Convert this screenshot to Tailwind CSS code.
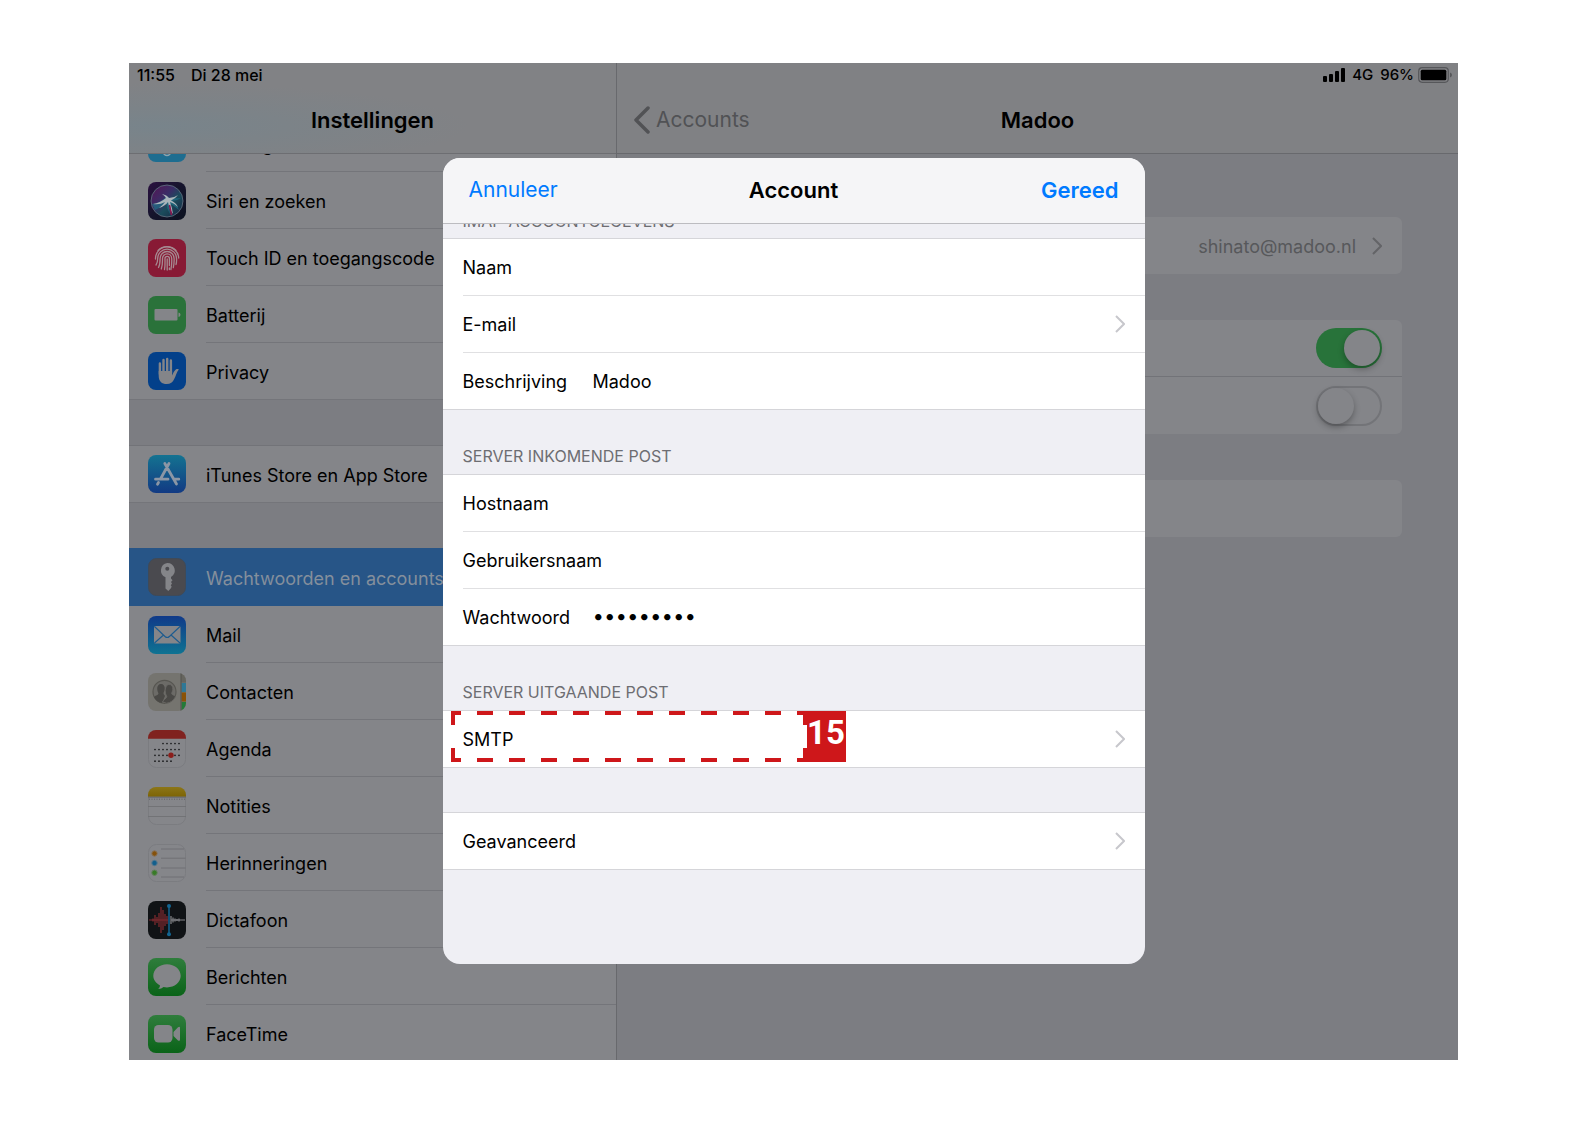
<!DOCTYPE html>
<html lang="nl">
<head>
  <meta charset="UTF-8">
  <meta name="viewport" content="width=device-width, initial-scale=1.0">
  <title>Instellingen - Account</title>
  <script src="https://cdn.jsdelivr.net/npm/@tailwindcss/browser@4"></script>
</head>
<body class="bg-white font-['Inter','Liberation_Sans',sans-serif] text-[18px] leading-6 text-black">
  <main class="px-[129px] py-[63px]">
    <div class="relative flex h-[calc(100vh-126px)] overflow-hidden bg-[#7c7d82]">

      <!-- Sidebar -->
      <aside class="flex w-[488px] shrink-0 flex-col border-r border-[#68696d] bg-[#848589]">
        <header class="h-[91px] shrink-0 border-b border-[#6d6e72] bg-[#818285] bg-[radial-gradient(ellipse_at_6%_70%,#78848b_0%,#7c8388_20%,#818285_48%)]">
          <div class="flex h-6 items-center gap-4 pl-2 text-[16px] font-medium">
            <span>11:55</span>
            <span>Di 28 mei</span>
          </div>
          <h1 class="flex h-[66px] items-center justify-center text-[22px] font-semibold">Instellingen</h1>
        </header>

        <nav class="min-h-0 flex-1 overflow-hidden">
          <!-- Row scrolled under the header -->
          <a href="#" class="flex h-[18px] items-end gap-5 overflow-hidden pl-[19px]">
            <svg class="mb-[10px] size-[38px] shrink-0" viewBox="0 0 38 38"><rect width="38" height="38" rx="8" fill="#1e6d90"/><circle cx="19" cy="28" r="3.5" fill="none" stroke="#8fa3ad" stroke-width="1.6"/></svg>
            <span class="flex h-[57px] flex-1 shrink-0 items-center border-b border-[#74757a] pt-[3px]">Achtergrond</span>
          </a>
          <a href="#" class="flex h-[57px] items-center gap-5 pl-[19px]">
            <svg class="size-[38px] shrink-0" viewBox="0 0 38 38">
              <defs>
                <linearGradient id="siriBg" x1="0" y1="0" x2="1" y2="1"><stop offset="0" stop-color="#2b1140"/><stop offset=".5" stop-color="#15142c"/><stop offset="1" stop-color="#0c1220"/></linearGradient>
                <linearGradient id="siriOrb" x1="0" y1="0" x2="1" y2="1"><stop offset="0" stop-color="#571353"/><stop offset=".4" stop-color="#3a2d66"/><stop offset=".6" stop-color="#1b4c5c"/><stop offset="1" stop-color="#16213f"/></linearGradient>
              </defs>
              <rect width="38" height="38" rx="8" fill="url(#siriBg)"/>
              <circle cx="19" cy="19" r="16" fill="url(#siriOrb)" stroke="#5b6b7c" stroke-width=".9"/>
              <path d="M4 22q8-1 14-7q5 2 15 1q-4 3-9 3q5 3 7 9q-6-5-10-7l1 11q-3-5-4-11q-5 5-11 7z" fill="#1f6f86" opacity=".7"/>
              <path d="M5 22q7-1 13-6q-1-2-4-4q5 1 7 4q5 0 9-3q-3 4-7 5.500q5 2 7 6.500q-4-4-8-5q2 5 3 12q-4-5-5-12q-3 4-9 6q4-3 6-6q-5 3-12 2z" fill="#a9b4ba"/>
              <path d="M21.500 23q1 5 2 10" stroke="#8c1750" stroke-width="1.600" fill="none"/>
            </svg>
            <span class="flex h-full flex-1 items-center border-b border-[#74757a] pt-[3px]">Siri en zoeken</span>
          </a>
          <a href="#" class="flex h-[57px] items-center gap-5 pl-[19px]">
            <svg class="size-[38px] shrink-0" viewBox="0 0 38 38">
              <rect width="38" height="38" rx="8" fill="#881a35"/>
              <g fill="none" stroke="#a68a91" stroke-width="1.3" stroke-linecap="round">
                <path d="M10 11.500a12.500 12.500 0 0 1 18 0"/>
                <path d="M7.500 20a11.600 11.600 0 0 1 23.200-1"/>
                <path d="M8 26c1.500-2 1.700-4 1.700-6.500a9.400 9.400 0 0 1 18.800 0q.3 3-.5 6"/>
                <path d="M10.500 28.500c1.600-3 1.600-6 1.600-9a7 7 0 0 1 14 0q.2 5-.8 9"/>
                <path d="M13.300 30c1.400-4 1.200-7 1.200-10.500a4.600 4.600 0 0 1 9.200 0q.3 6-.8 11"/>
                <path d="M16.500 30.500c.8-4 .5-7 .5-11a2.200 2.200 0 0 1 4.400 0v7"/>
                <path d="M19.200 20v11M21.400 29v1.500"/>
              </g>
            </svg>
            <span class="flex h-full flex-1 items-center border-b border-[#74757a] pt-[3px]">Touch ID en toegangscode</span>
          </a>
          <a href="#" class="flex h-[57px] items-center gap-5 pl-[19px]">
            <svg class="size-[38px] shrink-0" viewBox="0 0 38 38"><rect width="38" height="38" rx="8" fill="#2a723a"/><rect x="6.500" y="13" width="23" height="11.500" rx="1" fill="#848589"/><path d="M30.500 16.500q2 .5 2 2.200t-2 2.200z" fill="#848589"/></svg>
            <span class="flex h-full flex-1 items-center border-b border-[#74757a] pt-[3px]">Batterij</span>
          </a>
          <a href="#" class="flex h-[57px] items-center gap-5 border-b border-[#74757a] pl-[19px]">
            <svg class="size-[38px] shrink-0" viewBox="0 0 38 38">
              <rect width="38" height="38" rx="8" fill="#03408a"/>
              <g fill="none" stroke="#848589" stroke-width="2.400" stroke-linecap="round"><path d="M11.900 11.500V22M15.500 8V20M19.200 7V20M22.900 8.500V21"/></g>
              <path d="M10.700 19h13.400v4.500c1.200-2.500 2.300-5 4-6.200 1-.6 2.600-.4 2.700.2-2 2.500-3 6.500-4.600 9.600-1.500 3.200-3.700 5-7.400 5-5 0-8.100-3-8.100-8.100z" fill="#848589"/>
            </svg>
            <span class="pt-[3px]">Privacy</span>
          </a>

          <div class="h-[46px] border-b border-[#727378] bg-[#7c7d82]"></div>
          <a href="#" class="flex h-[57px] items-center gap-5 border-b border-[#74757a] pl-[19px]">
            <svg class="size-[38px] shrink-0" viewBox="0 0 38 38">
              <defs><linearGradient id="store" x2="0" y2="1"><stop stop-color="#147391"/><stop offset="1" stop-color="#123a83"/></linearGradient></defs>
              <rect width="38" height="38" rx="8" fill="url(#store)"/>
              <g fill="none" stroke="#8b96a5" stroke-width="2.800" stroke-linecap="round"><path d="M21 8.500 12.500 24M16.800 8.500 28.500 29M7.500 24.200H20M26 24.200h4.800M10.500 27.500 9.500 29.300"/></g>
            </svg>
            <span class="pt-[3px]">iTunes Store en App Store</span>
          </a>

          <div class="h-[45px] bg-[#7c7d82]"></div>
          <a href="#" aria-current="page" class="flex h-[58px] items-center gap-5 bg-[#275587] pl-[19px] text-[#848f9c]">
            <svg class="size-[38px] shrink-0" viewBox="0 0 38 38">
              <rect x=".5" y=".5" width="37" height="37" rx="8" fill="#4a4a4f" stroke="#3f4a58"/>
              <path fill-rule="evenodd" d="M19.300 5a7.500 7.500 0 0 1 3.700 14v1.500l1.500 1.800-1.500 1.800 1 1.400-1.200 1.700.9 1.500-1 1.800-2.400 2.500-2.800-2.500V19.300A7.500 7.500 0 0 1 19.300 5zm0 3.800a2 2 0 1 0 0 4 2 2 0 0 0 0-4z" fill="#848589"/>
            </svg>
            <span class="pt-[3px]">Wachtwoorden en accounts</span>
          </a>
          <a href="#" class="flex h-[57px] items-center gap-5 pl-[19px]">
            <svg class="size-[38px] shrink-0" viewBox="0 0 38 38">
              <defs><linearGradient id="mail" x2="0" y2="1"><stop stop-color="#103a89"/><stop offset="1" stop-color="#0f7392"/></linearGradient></defs>
              <rect width="38" height="38" rx="8" fill="url(#mail)"/>
              <rect x="6" y="10" width="26.500" height="17.500" rx="1.500" fill="#848589"/>
              <path d="M6.500 10.500 17 20.500q2.200 2 4.400 0L32 10.500M6.500 27l9-8M32 27l-9-8" fill="none" stroke="#1c5b8f" stroke-width="1.100"/>
            </svg>
            <span class="flex h-full flex-1 items-center border-b border-[#74757a] pt-[3px]">Mail</span>
          </a>
          <a href="#" class="flex h-[57px] items-center gap-5 pl-[19px]">
            <svg class="size-[38px] shrink-0" viewBox="0 0 38 38">
              <defs><clipPath id="tile"><rect width="38" height="38" rx="8"/></clipPath></defs>
              <g clip-path="url(#tile)">
                <rect width="38" height="38" fill="#75746f"/>
                <path d="M33 0h5v9.500h-5z" fill="#66655f"/><path d="M33.500 10H38v9h-4.500z" fill="#2f7897"/><path d="M33.500 19.500H38v9h-4.500z" fill="#8a5207"/><path d="M33.500 29H38v9h-4.500z" fill="#247a38"/>
                <path d="M33 0v38" stroke="#53524e"/>
                <circle cx="16.500" cy="18.800" r="11.500" fill="#6c6b67" stroke="#575651" stroke-width="1.200"/>
                <path d="M13 11c2.600 0 4 2 3.700 5-.2 2.300-1 3-1.200 4.200.2 1.800 1 1.500 1.500 2.800l-3 7q-6-1-8-6c2-2 4.300-1.700 4.500-3.500C10 19 9.300 18 9.200 16c-.2-3 1.400-5 3.800-5z" fill="#4a4946"/>
                <path d="M21 11.500c2.600 0 4 2 3.800 4.800-.2 2.200-1 3-1.200 4 .1 1.800 2.600 1.600 4 3.200q-3 6-9 6.700l-4-1.200c.8-3 4.200-3.500 4.200-5.500-.2-1.200-1.300-2-1.500-4.500-.3-4 1.200-7.500 3.700-7.500z" fill="#4a4946" stroke="#6c6b67" stroke-width=".8"/>
              </g>
            </svg>
            <span class="flex h-full flex-1 items-center border-b border-[#74757a] pt-[3px]">Contacten</span>
          </a>
          <a href="#" class="flex h-[57px] items-center gap-5 pl-[19px]">
            <svg class="size-[38px] shrink-0" viewBox="0 0 38 38">
              <rect x=".5" y=".5" width="37" height="37" rx="8" fill="#85868a" stroke="#7b7c80"/>
              <path d="M0 8.700V8a8 8 0 0 1 8-8h22a8 8 0 0 1 8 8v.7z" fill="#80221f"/>
              <g stroke="#17181a" stroke-width="1.700" stroke-linecap="round" stroke-dasharray="0 4"><path d="M15 13.500h16.100M7 19.500h24.100M7 25.300h24.100M7 31.200h16.100"/></g>
              <circle cx="23" cy="25.300" r="2.700" fill="#8b1f1c"/>
            </svg>
            <span class="flex h-full flex-1 items-center border-b border-[#74757a] pt-[3px]">Agenda</span>
          </a>
          <a href="#" class="flex h-[57px] items-center gap-5 pl-[19px]">
            <svg class="size-[38px] shrink-0" viewBox="0 0 38 38">
              <defs><linearGradient id="notes" x2="0" y2="1"><stop stop-color="#8c7618"/><stop offset="1" stop-color="#7d6405"/></linearGradient></defs>
              <rect x=".5" y=".5" width="37" height="37" rx="8" fill="#85868a" stroke="#7b7c80"/>
              <path d="M0 9.700V8a8 8 0 0 1 8-8h22a8 8 0 0 1 8 8v1.700z" fill="url(#notes)"/>
              <path d="M0 10.200h38" stroke="#66676a"/><path d="M1 12.200h36" stroke="#606164" stroke-dasharray="1 1.500"/>
              <path d="M0 19.500h38M0 29.500h38" stroke="#6d6e71" stroke-width=".8"/>
            </svg>
            <span class="flex h-full flex-1 items-center border-b border-[#74757a] pt-[3px]">Notities</span>
          </a>
          <a href="#" class="flex h-[57px] items-center gap-5 pl-[19px]">
            <svg class="size-[38px] shrink-0" viewBox="0 0 38 38">
              <rect x=".5" y=".5" width="37" height="37" rx="8" fill="#85868a" stroke="#7b7c80"/>
              <path d="M13 5h23M13 14.200h24.500M13 24h24.500M13 33h23" stroke="#6a6b6e" stroke-width=".8"/>
              <circle cx="6.500" cy="9.500" r="2.700" fill="#85510b" stroke="#88745c"/><circle cx="6.500" cy="19" r="2.700" fill="#125f8d" stroke="#55788e"/><circle cx="6.500" cy="28.700" r="2.700" fill="#387b27" stroke="#64805f"/>
            </svg>
            <span class="flex h-full flex-1 items-center border-b border-[#74757a] pt-[3px]">Herinneringen</span>
          </a>
          <a href="#" class="flex h-[57px] items-center gap-5 pl-[19px]">
            <svg class="size-[38px] shrink-0" viewBox="0 0 38 38">
              <rect width="38" height="38" rx="8" fill="#101316"/>
              <g fill="none" stroke-width="1.200"><path d="M1 19h19M5 17.500v3M7 14v10M9 16v6M11 12v14M13 6v26M15 9v20M17 13v12M19 15v8" stroke="#832b30"/><path d="M23 15v8M25 16.500v5M27 17.500v3M29 18v2M31 17.500v3M23 19h14" stroke="#85868a"/></g>
              <path d="M21 5v28" stroke="#126592" stroke-width="1.500"/><circle cx="21" cy="5" r="2" fill="#126592"/><circle cx="21" cy="33.300" r="2" fill="#126592"/>
            </svg>
            <span class="flex h-full flex-1 items-center border-b border-[#74757a] pt-[3px]">Dictafoon</span>
          </a>
          <a href="#" class="flex h-[57px] items-center gap-5 pl-[19px]">
            <svg class="size-[38px] shrink-0" viewBox="0 0 38 38">
              <defs><linearGradient id="green" x2="0" y2="1"><stop stop-color="#2f7d3c"/><stop offset="1" stop-color="#0a6318"/></linearGradient></defs>
              <rect width="38" height="38" rx="8" fill="url(#green)"/>
              <path d="M19 6.200c7.600 0 13.700 5.100 13.700 11.600S26.600 29.400 19 29.400c-1.200 0-2.400-.1-3.500-.4-1.300 1-3.200 2-5.300 2 1-1 1.700-2.200 1.800-3.600-4-2-6.700-5.500-6.700-9.600C5.300 11.300 11.400 6.200 19 6.200z" fill="#848589"/>
            </svg>
            <span class="flex h-full flex-1 items-center border-b border-[#74757a] pt-[3px]">Berichten</span>
          </a>
          <a href="#" class="flex h-[57px] items-center gap-5 pl-[19px]">
            <svg class="size-[38px] shrink-0" viewBox="0 0 38 38">
              <rect width="38" height="38" rx="8" fill="url(#green)"/>
              <rect x="6" y="10" width="18.500" height="17.500" rx="4.500" fill="#848589"/>
              <path d="M25.500 17 30 12.300q2-1.300 2 .8v11.500q0 2-2 .8L25.500 21z" fill="#848589"/>
            </svg>
            <span class="pt-[3px]">FaceTime</span>
          </a>
        </nav>
      </aside>

      <!-- Detail pane -->
      <section class="flex min-w-0 flex-1 flex-col">
        <header class="h-[91px] shrink-0 border-b border-[#68696d] bg-[#808184]">
          <div class="flex h-6 items-center justify-end gap-[7px] pr-[6px] text-[15px] font-medium">
            <svg class="h-[14px] w-[22px]" viewBox="0 0 22 14"><rect y="8" width="4" height="6" rx="1"/><rect x="6" y="6" width="4" height="8" rx="1"/><rect x="12" y="3" width="4" height="11" rx="1"/><rect x="18" y="0" width="4" height="14" rx="1"/></svg>
            <span>4G</span>
            <span>96%</span>
            <svg class="-ml-[3px] h-4 w-[34px]" viewBox="0 0 34 16"><rect x=".7" y=".7" width="29.600" height="14.600" rx="3.500" fill="none" stroke="#56575a" stroke-width="1.200"/><rect x="2.700" y="2.700" width="25.600" height="10.600" rx="1.500"/><path d="M32 5.500q2 .8 2 2.500t-2 2.500z" fill="#56575a"/></svg>
          </div>
          <div class="grid h-[66px] grid-cols-[1fr_auto_1fr] items-center">
            <a href="#" class="flex items-center gap-[6px] pl-4 text-[21px] text-[#515255]">
              <svg class="h-7 w-[17px]" viewBox="0 0 17 28"><path d="M15 2 3 14l12 12" fill="none" stroke="currentColor" stroke-width="3.500" stroke-linecap="round" stroke-linejoin="round"/></svg>
              Accounts
            </a>
            <h2 class="text-[22px] font-semibold">Madoo</h2>
          </div>
        </header>

        <div class="px-14 pt-[63px]">
          <a href="#" class="flex h-[57px] items-center justify-end gap-4 rounded-md bg-[#848589] pr-5 text-[#57585b]">
            <span class="pt-[2px]">shinato@madoo.nl</span>
            <svg class="h-[18px] w-[10px]" viewBox="0 0 10 18"><path d="M1 1l8 8-8 8" fill="none" stroke="#636467" stroke-width="2"/></svg>
          </a>
          <div class="mt-[46px] rounded-md bg-[#848589]">
            <div class="flex h-[57px] items-center justify-end border-b border-[#727378] pr-5">
              <input type="checkbox" checked aria-label="E-mail" class="flex h-10 w-[66px] appearance-none items-center rounded-full bg-[#727377] p-[2px] before:size-[36px] before:rounded-full before:bg-[#848589] before:shadow-[0_3px_6px_rgba(0,0,0,0.3)] checked:justify-end checked:bg-[#28733a]">
            </div>
            <div class="flex h-[57px] items-center justify-end pr-5">
              <input type="checkbox" aria-label="Notities" class="flex h-10 w-[66px] appearance-none items-center rounded-full border-2 border-[#737478] before:size-[36px] before:rounded-full before:bg-[#848589] before:shadow-[0_3px_6px_rgba(0,0,0,0.3)] checked:justify-end">
            </div>
          </div>
          <div class="mt-[46px] h-[57px] rounded-md bg-[#848589]"></div>
        </div>
      </section>

      <!-- Account dialog -->
      <div class="absolute inset-0 flex items-center justify-center pb-[2px]">
        <form role="dialog" aria-labelledby="dialogTitle" class="w-[702px] overflow-hidden rounded-[17px] bg-[#efeff4]">
          <header class="grid h-[66px] grid-cols-[1fr_auto_1fr] items-center border-b border-[#bcbcc0] bg-[#f5f5f7] px-[26px]">
            <button type="button" class="justify-self-start text-[21px] text-[#007aff]">Annuleer</button>
            <h2 id="dialogTitle" class="text-[22px] font-semibold">Account</h2>
            <button type="submit" class="justify-self-end text-[22px] font-semibold text-[#007aff]">Gereed</button>
          </header>

          <div class="flex h-[14px] items-end overflow-hidden pb-[5px] pl-5">
            <h3 class="text-[16px] leading-6 text-[#6d6d72]">IMAP-ACCOUNTGEGEVENS</h3>
          </div>
          <div class="border-y border-[#d5d5d9] bg-white pl-5">
            <div class="flex h-[57px] items-center border-b border-[#e0e0e2] pt-[2px]">
              <label for="name" class="w-[130px]">Naam</label>
              <input id="name" type="text" class="min-w-0 flex-1 outline-none">
            </div>
            <a href="#" class="flex h-[57px] items-center justify-between border-b border-[#e0e0e2] pr-5">
              <span class="pt-[2px]">E-mail</span>
              <svg class="h-[18px] w-[10px]" viewBox="0 0 10 18"><path d="M1 1l8 8-8 8" fill="none" stroke="#c7c7cc" stroke-width="2"/></svg>
            </a>
            <div class="flex h-14 items-center pt-[2px]">
              <label for="description" class="w-[130px]">Beschrijving</label>
              <input id="description" type="text" value="Madoo" class="min-w-0 flex-1 outline-none">
            </div>
          </div>

          <h3 class="flex h-16 items-end pb-[6px] pl-5 text-[16px] text-[#6d6d72]">SERVER INKOMENDE POST</h3>
          <div class="border-y border-[#d5d5d9] bg-white pl-5">
            <div class="flex h-[57px] items-center border-b border-[#e0e0e2] pt-[2px]">
              <label for="host" class="w-[130px]">Hostnaam</label>
              <input id="host" type="text" class="min-w-0 flex-1 outline-none">
            </div>
            <div class="flex h-[57px] items-center border-b border-[#e0e0e2] pt-[2px]">
              <label for="user" class="w-[150px]">Gebruikersnaam</label>
              <input id="user" type="text" class="min-w-0 flex-1 outline-none">
            </div>
            <div class="flex h-14 items-center pt-[2px]">
              <label for="password" class="w-[130px]">Wachtwoord</label>
              <input id="password" type="password" value="madoo2019" class="min-w-0 flex-1 font-['DejaVu_Sans',sans-serif] font-bold outline-none">
            </div>
          </div>

          <h3 class="flex h-16 items-end pb-[6px] pl-5 text-[16px] text-[#6d6d72]">SERVER UITGAANDE POST</h3>
          <div class="relative border-y border-[#d5d5d9] bg-white pl-5">
            <a href="#" class="flex h-14 items-center justify-between pr-5">
              <span class="pt-[2px]">SMTP</span>
              <svg class="h-[18px] w-[10px]" viewBox="0 0 10 18"><path d="M1 1l8 8-8 8" fill="none" stroke="#c7c7cc" stroke-width="2"/></svg>
            </a>
            <!-- Step marker -->
            <div class="pointer-events-none absolute top-0 left-2 flex h-[51px]">
              <svg class="h-[51px] w-[356px]" viewBox="0 0 356 51">
                <g fill="none" stroke="#ce171a" stroke-width="4">
                  <path d="M2 2h352M2 49h352" stroke-dasharray="16 16" stroke-dashoffset="8"/>
                  <path d="M10 2H2v12M2 37v12h8M346 2h8v12M354 37v12h-8"/>
                </g>
              </svg>
              <span class="flex w-[39px] justify-center bg-[#ce171a] font-['Roboto',sans-serif] text-[33px] leading-[44px] font-bold text-white">15</span>
            </div>
          </div>

          <div class="mt-11 mb-[94px] border-y border-[#d5d5d9] bg-white pl-5">
            <a href="#" class="flex h-14 items-center justify-between pr-5">
              <span class="pt-[2px]">Geavanceerd</span>
              <svg class="h-[18px] w-[10px]" viewBox="0 0 10 18"><path d="M1 1l8 8-8 8" fill="none" stroke="#c7c7cc" stroke-width="2"/></svg>
            </a>
          </div>
        </form>
      </div>
    </div>
  </main>
</body>
</html>
